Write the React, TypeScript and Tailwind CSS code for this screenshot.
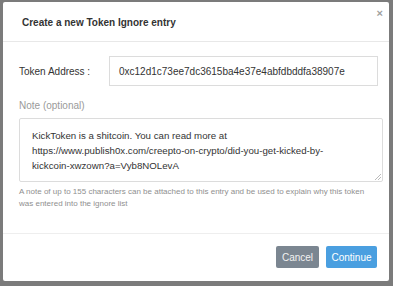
export default function App() {
  return (
    <div className="w-[393px] h-[286px] bg-[#7b7b7b] pt-[2px] pl-[3px] font-['Liberation_Sans',Arial,sans-serif] overflow-hidden">
      <div className="w-[386px] h-[279px] bg-white rounded-[2px] flex flex-col">
        {/* Header */}
        <div className="relative h-[40px] border-b border-[#e8e8e8] flex items-center pl-[19px]">
          <h2 className="text-[10px] font-bold text-[#333] mt-[1px]">Create a new Token Ignore entry</h2>
          <span className="absolute right-[6px] top-[6px] text-[11px] leading-none font-bold text-[#a0a0a0]">×</span>
        </div>

        {/* Body */}
        <div className="pl-[16px] pt-[14px] h-[192px] border-b border-[#eeeeee]">
          <div className="flex items-center">
            <label className="w-[90px] text-[10px] text-[#333]">Token Address :</label>
            <div className="w-[269px] h-[30px] border border-[#dcdcdc] flex items-center pl-[9px] text-[10px] text-[#333]">
              0xc12d1c73ee7dc3615ba4e37e4abfdbddfa38907e
            </div>
          </div>
          <p className="mt-[14px] text-[10px] leading-[12px] text-[#9a9a9a]">Note (optional)</p>
          <div className="relative mt-[6px] w-[364px] h-[64px] border border-[#dcdcdc] rounded-[2px] pl-[12px] pt-[9px] text-[9.7px] leading-[15px] text-[#333]">
            KickToken is a shitcoin. You can read more at
            <br />
            https://www.publish0x.com/creepto-on-crypto/did-you-get-kicked-by-
            <br />
            kickcoin-xwzown?a=Vyb8NOLevA
            <svg className="absolute right-[1px] bottom-[1px]" width="6" height="6" viewBox="0 0 6 6">
              <path d="M6 0L0 6M6 3L3 6" stroke="#aaa" strokeWidth="0.8" />
            </svg>
          </div>
          <p className="mt-[4px] w-[352px] text-[8px] leading-[12px] text-[#8f8f8f]">
            A note of up to 155 characters can be attached to this entry and be used to explain why this token was entered into the ignore list
          </p>
        </div>

        {/* Footer */}
        <div className="flex justify-end gap-[7px] pt-[12px] pr-[12px]">
          <button className="w-[43px] h-[22px] rounded-[2px] bg-[#7b8691] text-[#f2f2f2] text-[10px]">Cancel</button>
          <button className="w-[51px] h-[22px] rounded-[2px] bg-[#4a9fe0] text-white text-[10px]">Continue</button>
        </div>
      </div>
    </div>
  );
}
